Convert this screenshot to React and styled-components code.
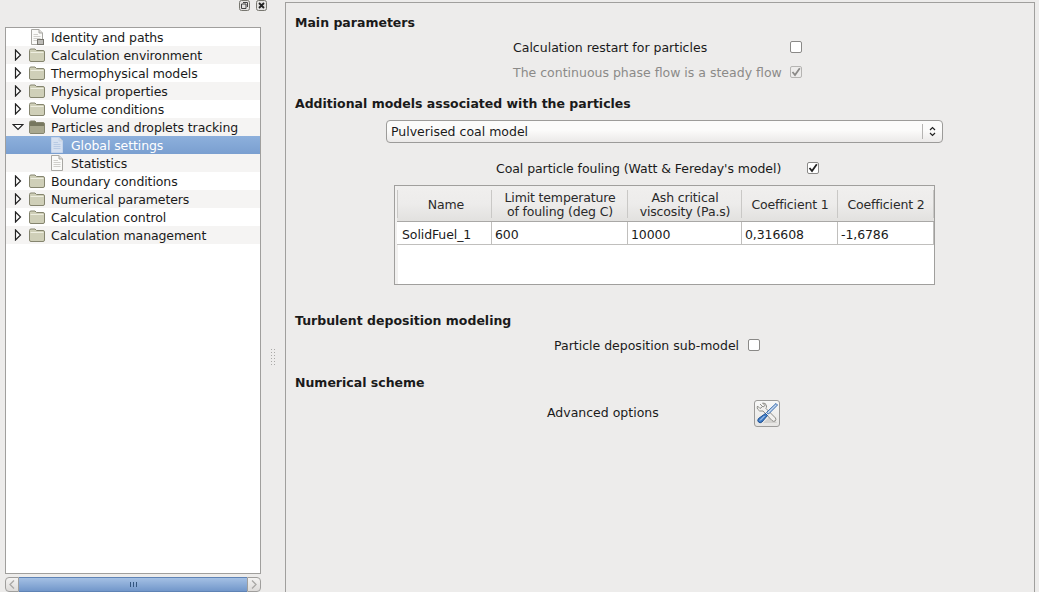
import React from 'react'
import styled, { createGlobalStyle } from 'styled-components'

const Global = createGlobalStyle`
  html, body { margin: 0; padding: 0; height: 100%; overflow: hidden; background: #edeceb; }
  body { font-family: "DejaVu Sans", sans-serif; font-size: 12.5px; color: #1a1a1a; }
`

const Page = styled.div`
  display: flex;
  width: 1039px;
  height: 592px;
  background: #edeceb;
`
const LeftPane = styled.div`
  width: 261px;
  margin-left: 5px;
  display: flex;
  flex-direction: column;
  flex: none;
`
const DockBar = styled.div`
  height: 27px;
  display: flex;
  justify-content: flex-end;
  align-items: flex-start;
  gap: 6px;
  box-sizing: border-box;
  margin-right: -1px;
`
const DockBtn = styled.svg`
  width: 11px;
  height: 11px;
`
const Tree = styled.div`
  height: 547px;
  box-sizing: border-box;
  width: 256px;
  background: #fff;
  border: 1px solid #a09f9d;
  flex: none;
`
const TreeRow = styled.div`
  height: 18px;
  display: flex;
  align-items: center;
  box-sizing: border-box;
  padding-left: ${p => p.$depth * 20}px;
  background: ${p => p.$selected
    ? 'linear-gradient(#8db0dc, #7a9fd0)'
    : p.$odd ? '#f5f4f3' : '#fff'};
  color: ${p => (p.$selected ? '#fff' : '#1a1a1a')};
`
const ArrowSlot = styled.div`
  width: 23px;
  height: 18px;
  flex: none;
  display: flex;
  align-items: center;
  justify-content: center;
`
const IconSlot = styled.div`
  width: 16px;
  flex: none;
  display: flex;
  justify-content: center;
`
const NodeLabel = styled.span`
  margin-left: 6px;
  white-space: nowrap;
  letter-spacing: -0.1px;
`
const HScroll = styled.div`
  width: 256px;
  height: 15px;
  margin-top: 3px;
  display: flex;
  box-sizing: border-box;
  flex: none;
`
const ScrollEnd = styled.div`
  width: 14px;
  height: 15px;
  box-sizing: border-box;
  border: 1px solid #a09f9d;
  border-radius: ${p => (p.$right ? '0 4px 4px 0' : '4px 0 0 4px')};
  background: linear-gradient(#f4f3f2, #dddbd9);
  display: flex;
  align-items: center;
  justify-content: center;
`
const ScrollThumb = styled.div`
  flex: 1;
  background: linear-gradient(#a4c0e4, #7297ca);
  border-top: 1px solid #5f83b5;
  border-bottom: 1px solid #5f83b5;
  display: flex;
  align-items: center;
  justify-content: center;
  gap: 2px;
`
const Grip = styled.i`
  width: 1px;
  height: 5px;
  background: #33557f;
`
const Splitter = styled.div`
  width: 19px;
  flex: none;
  display: flex;
  align-items: center;
  justify-content: center;
  padding: 122px 5px 0 0;
  box-sizing: border-box;
`
const SplitDots = styled.div`
  display: grid;
  grid-template-columns: 1px 1px;
  column-gap: 2px;
  row-gap: 2px;
  i { width: 1px; height: 1px; background: #aaa9a7; }
`
const Main = styled.div`
  margin-top: 2px;
  width: 750px;
  height: 590px;
  flex: none;
  box-sizing: border-box;
  border: 1px solid #a09f9d;
  border-bottom: 0;
  padding: 0 0 0 9px;
  display: flex;
  flex-direction: column;
`
const Heading = styled.div`
  font-weight: bold;
  height: 18px;
  line-height: 18px;
  margin-top: ${p => p.$top}px;
  white-space: nowrap;
`
const Row = styled.div`
  display: flex;
  align-items: center;
  height: 18px;
  padding-left: ${p => p.$left}px;
  margin-top: ${p => p.$top}px;
  color: ${p => (p.$muted ? '#8b8a88' : 'inherit')};
`
const RowLabel = styled.span`
  width: ${p => p.$w}px;
  flex: none;
  white-space: nowrap;
  letter-spacing: ${p => (p.$tight ? '-0.07px' : 'normal')};
`
const Check = styled.span`
  width: 12px;
  height: 12px;
  flex: none;
  box-sizing: border-box;
  border: 1px solid ${p => (p.$disabled ? '#b5b4b2' : '#8a8987')};
  border-radius: 2px;
  background: ${p => (p.$disabled ? '#edeceb' : '#fff')};
  display: flex;
  align-items: center;
  justify-content: center;
`
const Combo = styled.div`
  margin: 7px 0 0 91px;
  width: 557px;
  height: 23px;
  box-sizing: border-box;
  border: 1px solid #9c9b99;
  border-radius: 4px;
  background: linear-gradient(#fbfbfa, #fbfbfa 45%, #ebe9e8);
  display: flex;
  align-items: center;
  padding-left: 4px;
`
const ComboText = styled.span`
  flex: 1;
`
const ComboArrow = styled.div`
  width: 19px;
  height: 15px;
  border-left: 1px solid #b5b4b2;
  display: flex;
  align-items: center;
  justify-content: center;
`
const TableBox = styled.div`
  margin: 8px 0 0 99px;
  width: 541px;
  height: 100px;
  box-sizing: border-box;
  border: 1px solid #a09f9d;
  background: linear-gradient(to right, #f2f1f0 3px, #fff 3px);
`
const Grid = styled.div`
  display: grid;
  grid-template-columns: 95px 136px 114px 96px 96px;
  margin-left: 2px;
`
const HeadCell = styled.div`
  height: 36px;
  box-sizing: border-box;
  padding-top: 2px;
  background: linear-gradient(#f0efee, #edeceb 50%, #e2e1df);
  border-bottom: 1px solid #a9a8a6;
  display: flex;
  align-items: center;
  justify-content: center;
  text-align: center;
  line-height: 14px;
  letter-spacing: -0.15px;
  color: #2a2a2a;
  position: relative;
  &::after {
    content: '';
    position: absolute;
    right: 0;
    top: 4px;
    bottom: 3px;
    width: 1px;
    background: #c9c8c6;
  }
  &:first-child {
    padding-left: 3px;
  }
  &:first-child::before {
    content: '';
    position: absolute;
    left: 0;
    top: 4px;
    bottom: 3px;
    width: 1px;
    background: #c9c8c6;
  }
`
const Cell = styled.div`
  height: 23px;
  box-sizing: border-box;
  padding-left: ${p => p.$pad || 3}px;
  padding-top: 3px;
  border-right: 1px solid #c0bfbd;
  border-bottom: 1px solid #c0bfbd;
  background: #fff;
  letter-spacing: -0.1px;
  display: flex;
  align-items: center;
`
const ToolButton = styled.div`
  width: 26px;
  height: 27px;
  margin-top: 2px;
  box-sizing: border-box;
  border: 1px solid #9c9b99;
  border-radius: 3px;
  background: linear-gradient(#f8f8f7, #e6e5e3);
  display: flex;
  align-items: center;
  justify-content: center;
`

const RightArrow = () => (
  <svg width="8" height="12" viewBox="0 0 8 12">
    <path d="M1.5 1 L6.5 6 L1.5 11 Z" fill="#fff" stroke="#222" strokeWidth="1.2" />
  </svg>
)
const DownArrow = () => (
  <svg width="12" height="8" viewBox="0 0 12 8">
    <path d="M1 1.5 L11 1.5 L6 6.5 Z" fill="#fff" stroke="#222" strokeWidth="1.2" />
  </svg>
)
const Folder = ({ open }) => (
  <svg width="16" height="14" viewBox="0 0 16 14">
    <path d="M.5 2.5 Q.5 1 2 1 H6 L7.5 2.5 H14 Q15.5 2.5 15.5 4 V12 Q15.5 13.5 14 13.5 H2 Q.5 13.5 .5 12 Z" fill={open ? '#77775f' : '#cfcfb8'} stroke="#85856f" />
    {open && <path d="M1 6 H15 V12.5 Q15 13 14 13 H2 Q1 13 1 12.5 Z" fill="#a9a88f" />}
    {!open && <path d="M1.5 4.5 H14.5" stroke="#eeeee0" />}
  </svg>
)
const Doc = ({ shortcut, dim }) => (
  <svg width="14" height="16" viewBox="0 0 14 16">
    <path d="M1.5 .5 H9 L12.5 4 V15.5 H1.5 Z" fill={dim ? '#d5e0f0' : '#fafaf8'} stroke={dim ? '#c5d4ea' : '#a8a7a3'} />
    <path d="M9 .5 V4 H12.5" fill="#dddcd8" stroke={dim ? '#c5d4ea' : '#a8a7a3'} />
    <path d="M3.5 5.5 H8 M3.5 7.5 H10.5 M3.5 9.5 H10.5 M3.5 11.5 H10.5" stroke={dim ? '#b8cae4' : '#d0cfcb'} />
    {shortcut && <rect x="7.5" y="10.5" width="6" height="5" fill="#bdbcb8" stroke="#77766f" />}
  </svg>
)
const Tick = ({ color = '#222' }) => (
  <svg width="10" height="10" viewBox="0 0 10 10">
    <path d="M1.5 5 L4 8 L8.8 1.2" fill="none" stroke={color} strokeWidth="1.8" />
  </svg>
)
const Chevron = ({ right }) => (
  <svg width="6" height="9" viewBox="0 0 6 9">
    <path d={right ? 'M1 .5 L5 4.5 L1 8.5' : 'M5 .5 L1 4.5 L5 8.5'} fill="none" stroke="#a9a8a6" strokeWidth="1.3" />
  </svg>
)
const Tools = () => (
  <svg width="24" height="24" viewBox="0 0 24 24">
    <path d="M8 22 L22 22 L16 14 Z" fill="#c9c8c5" opacity="0.7" />
    <path d="M5 3 L8 6 L10 4.5 L7.5 2 Q11 1.5 11.5 5 Q11.5 6.5 11 7.5 L20.5 17 Q21.5 19 20 20 Q18.5 21 17 19.5 L8 10 Q4 11 2.5 8 Q2 6.5 2.5 5 L5 7.5 L7 6" fill="#f1f0ee" stroke="#8e8d88" strokeWidth="1" />
    <path d="M21 2.5 L22.5 4 L13.5 13 L11.5 11.5 Z" fill="#c7d9ef" stroke="#2f66ac" strokeWidth="1" />
    <path d="M10.5 12.5 L12.5 14.5 L7 21 Q5 22.5 3.5 21 Q2 19.5 3.5 17.5 Z" fill="#3f7dc9" stroke="#1f4f8f" strokeWidth="1" />
    <path d="M5 19.5 L9.5 15" stroke="#cfe0f5" strokeWidth="1" />
  </svg>
)

const nodes = [
  { label: 'Identity and paths', doc: true, shortcut: true },
  { label: 'Calculation environment' },
  { label: 'Thermophysical models' },
  { label: 'Physical properties' },
  { label: 'Volume conditions' },
  { label: 'Particles and droplets tracking', open: true },
  { label: 'Global settings', doc: true, depth: 1, selected: true },
  { label: 'Statistics', doc: true, depth: 1 },
  { label: 'Boundary conditions' },
  { label: 'Numerical parameters' },
  { label: 'Calculation control' },
  { label: 'Calculation management' },
]

const heads = ['Name', 'Limit temperature\nof fouling (deg C)', 'Ash critical\nviscosity (Pa.s)', 'Coefficient 1', 'Coefficient 2']
const cells = ['SolidFuel_1', '600', '10000', '0,316608', '-1,6786']

export default function App() {
  return (
    <Page>
      <Global />
      <LeftPane>
        <DockBar>
          <DockBtn viewBox="0 0 11 11">
            <rect x=".5" y=".5" width="10" height="10" rx="2" fill="#e4e3e1" stroke="#77766f" />
            <path d="M4 2.5 H8.5 V7 M2.5 4 H7 V8.5 H2.5 Z" fill="none" stroke="#444" />
          </DockBtn>
          <DockBtn viewBox="0 0 11 11">
            <rect x=".5" y=".5" width="10" height="10" rx="2" fill="#e4e3e1" stroke="#77766f" />
            <path d="M3 3 L8 8 M8 3 L3 8" stroke="#222" strokeWidth="1.8" />
          </DockBtn>
        </DockBar>
        <Tree>
          {nodes.map((n, i) => (
            <TreeRow key={n.label} $depth={n.depth || 0} $odd={i % 2 === 1} $selected={n.selected}>
              <ArrowSlot>
                {!n.doc && (n.open ? <DownArrow /> : <RightArrow />)}
              </ArrowSlot>
              <IconSlot>
                {n.doc ? <Doc shortcut={n.shortcut} dim={n.selected} /> : <Folder open={n.open} />}
              </IconSlot>
              <NodeLabel>{n.label}</NodeLabel>
            </TreeRow>
          ))}
        </Tree>
        <HScroll>
          <ScrollEnd><Chevron /></ScrollEnd>
          <ScrollThumb><Grip /><Grip /><Grip /></ScrollThumb>
          <ScrollEnd $right><Chevron right /></ScrollEnd>
        </HScroll>
      </LeftPane>
      <Splitter>
        <SplitDots>
          {Array.from({ length: 12 }).map((_, i) => <i key={i} />)}
        </SplitDots>
      </Splitter>
      <Main>
        <Heading $top={11}>Main parameters</Heading>
        <Row $left={218} $top={6}>
          <RowLabel $w={277}>Calculation restart for particles</RowLabel>
          <Check />
        </Row>
        <Row $left={218} $top={7} $muted>
          <RowLabel $w={277}>The continuous phase flow is a steady flow</RowLabel>
          <Check $disabled><Tick color="#8b8a88" /></Check>
        </Row>
        <Heading $top={14}>Additional models associated with the particles</Heading>
        <Combo>
          <ComboText>Pulverised coal model</ComboText>
          <ComboArrow>
            <svg width="7" height="11" viewBox="0 0 7 11">
              <path d="M1 4 L3.5 1.5 L6 4 M1 7 L3.5 9.5 L6 7" fill="none" stroke="#222" strokeWidth="1.2" />
            </svg>
          </ComboArrow>
        </Combo>
        <Row $left={201} $top={16}>
          <RowLabel $w={311} $tight>Coal particle fouling (Watt &amp; Fereday's model)</RowLabel>
          <Check><Tick /></Check>
        </Row>
        <TableBox>
          <Grid>
            {heads.map(h => (
              <HeadCell key={h}>
                <span>{h.split('\n').map(l => <div key={l}>{l}</div>)}</span>
              </HeadCell>
            ))}
            {cells.map((c, i) => <Cell key={c} $pad={i === 0 ? 5 : 3}>{c}</Cell>)}
          </Grid>
        </TableBox>
        <Heading $top={27}>Turbulent deposition modeling</Heading>
        <Row $left={259} $top={6}>
          <RowLabel $w={194}>Particle deposition sub-model</RowLabel>
          <Check />
        </Row>
        <Heading $top={20}>Numerical scheme</Heading>
        <Row $left={252} $top={11}>
          <RowLabel $w={207}>Advanced options</RowLabel>
          <ToolButton><Tools /></ToolButton>
        </Row>
      </Main>
    </Page>
  )
}
